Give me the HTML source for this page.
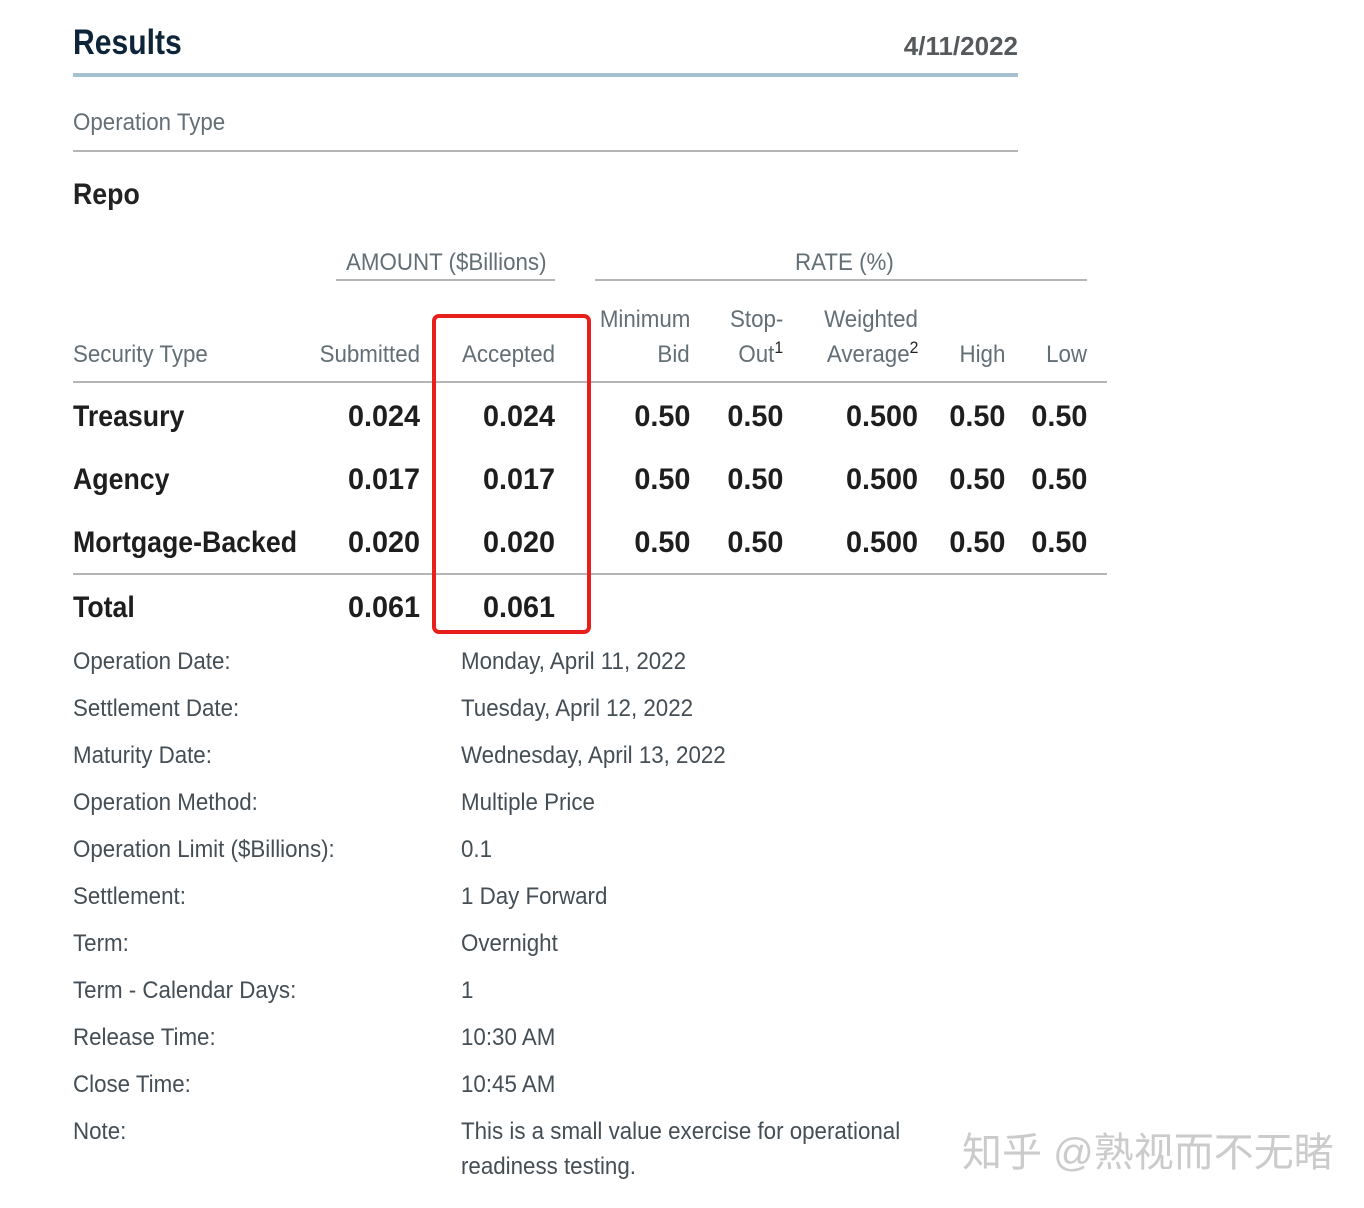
<!DOCTYPE html>
<html><head><meta charset="utf-8"><style>
html,body{margin:0;padding:0;background:#fff;width:1364px;height:1208px;overflow:hidden;position:relative}
body{font-family:"Liberation Sans",sans-serif}
.l,.r{position:absolute;white-space:nowrap;line-height:30px;height:30px}
.l{transform-origin:left center;transform:scaleX(.93)}
.r{transform-origin:right center;transform:scaleX(.93)}
.h{font-size:24px;color:#646f75}
.b{font-size:30px;font-weight:bold;color:#1e1e1e;transform:scaleX(.89)}
.n{font-size:30px;font-weight:bold;color:#1e1e1e;transform:scaleX(.96)}
.d{font-size:24px;color:#454e54}
.ln{position:absolute;height:2px;background:#b5b5b5}
sup{font-size:17px;vertical-align:top;position:relative;top:-7px;color:#222}
</style></head><body>
<div class="l" style="left:73px;top:28px;font-size:35px;font-weight:bold;color:#0e2539;line-height:30px;transform:scaleX(.86)">Results</div>
<div class="r" style="right:346px;top:31px;font-size:26px;font-weight:bold;color:#55595c;transform:scaleX(1)">4/11/2022</div>
<div class="ln" style="left:73px;top:73px;width:945px;height:4px;background:#a6c1d0"></div>
<div class="l h" style="left:73px;top:108px">Operation Type</div>
<div class="ln" style="left:73px;top:150px;width:945px"></div>
<div class="l" style="left:73px;top:180px;font-size:30px;font-weight:bold;color:#222;transform:scaleX(.89)">Repo</div>

<div class="l h" style="left:346px;top:248px">AMOUNT ($Billions)</div>
<div class="ln" style="left:336px;top:279px;width:219px"></div>
<div class="l h" style="left:795px;top:248px">RATE (%)</div>
<div class="ln" style="left:595px;top:279px;width:492px"></div>

<div class="r h" style="right:674px;top:305px">Minimum</div>
<div class="r h" style="right:581px;top:305px">Stop-</div>
<div class="r h" style="right:446px;top:305px">Weighted</div>
<div class="l h" style="left:73px;top:340px">Security Type</div>
<div class="r h" style="right:944px;top:340px">Submitted</div>
<div class="r h" style="right:809px;top:340px">Accepted</div>
<div class="r h" style="right:674px;top:340px">Bid</div>
<div class="r h" style="right:581px;top:340px">Out<sup>1</sup></div>
<div class="r h" style="right:446px;top:340px">Average<sup>2</sup></div>
<div class="r h" style="right:359px;top:340px">High</div>
<div class="r h" style="right:277px;top:340px">Low</div>
<div class="ln" style="left:73px;top:381px;width:1034px"></div>

<div class="l b" style="left:73px;top:402px">Treasury</div>
<div class="r n" style="right:944px;top:402px">0.024</div>
<div class="r n" style="right:809px;top:402px">0.024</div>
<div class="r n" style="right:674px;top:402px">0.50</div>
<div class="r n" style="right:581px;top:402px">0.50</div>
<div class="r n" style="right:446px;top:402px">0.500</div>
<div class="r n" style="right:359px;top:402px">0.50</div>
<div class="r n" style="right:277px;top:402px">0.50</div>

<div class="l b" style="left:73px;top:465px">Agency</div>
<div class="r n" style="right:944px;top:465px">0.017</div>
<div class="r n" style="right:809px;top:465px">0.017</div>
<div class="r n" style="right:674px;top:465px">0.50</div>
<div class="r n" style="right:581px;top:465px">0.50</div>
<div class="r n" style="right:446px;top:465px">0.500</div>
<div class="r n" style="right:359px;top:465px">0.50</div>
<div class="r n" style="right:277px;top:465px">0.50</div>

<div class="l b" style="left:73px;top:528px">Mortgage-Backed</div>
<div class="r n" style="right:944px;top:528px">0.020</div>
<div class="r n" style="right:809px;top:528px">0.020</div>
<div class="r n" style="right:674px;top:528px">0.50</div>
<div class="r n" style="right:581px;top:528px">0.50</div>
<div class="r n" style="right:446px;top:528px">0.500</div>
<div class="r n" style="right:359px;top:528px">0.50</div>
<div class="r n" style="right:277px;top:528px">0.50</div>
<div class="ln" style="left:73px;top:573px;width:1034px"></div>

<div class="l b" style="left:73px;top:593px">Total</div>
<div class="r n" style="right:944px;top:593px">0.061</div>
<div class="r n" style="right:809px;top:593px">0.061</div>

<div style="position:absolute;left:432px;top:314px;width:151px;height:312px;border:4px solid #e8201c;border-radius:7px"></div>

<div class="l d" style="left:73px;top:647px">Operation Date:</div><div class="l d" style="left:461px;top:647px">Monday, April 11, 2022</div>
<div class="l d" style="left:73px;top:694px">Settlement Date:</div><div class="l d" style="left:461px;top:694px">Tuesday, April 12, 2022</div>
<div class="l d" style="left:73px;top:741px">Maturity Date:</div><div class="l d" style="left:461px;top:741px">Wednesday, April 13, 2022</div>
<div class="l d" style="left:73px;top:788px">Operation Method:</div><div class="l d" style="left:461px;top:788px">Multiple Price</div>
<div class="l d" style="left:73px;top:835px">Operation Limit ($Billions):</div><div class="l d" style="left:461px;top:835px">0.1</div>
<div class="l d" style="left:73px;top:882px">Settlement:</div><div class="l d" style="left:461px;top:882px">1 Day Forward</div>
<div class="l d" style="left:73px;top:929px">Term:</div><div class="l d" style="left:461px;top:929px">Overnight</div>
<div class="l d" style="left:73px;top:976px">Term - Calendar Days:</div><div class="l d" style="left:461px;top:976px">1</div>
<div class="l d" style="left:73px;top:1023px">Release Time:</div><div class="l d" style="left:461px;top:1023px">10:30 AM</div>
<div class="l d" style="left:73px;top:1070px">Close Time:</div><div class="l d" style="left:461px;top:1070px">10:45 AM</div>
<div class="l d" style="left:73px;top:1117px">Note:</div><div class="l d" style="left:461px;top:1117px">This is a small value exercise for operational</div>
<div class="l d" style="left:461px;top:1152px">readiness testing.</div>

<div style="position:absolute;left:962px;top:1129px;font-family:'Liberation Sans','Noto Sans CJK SC',sans-serif;font-size:40px;line-height:48px;color:#cbcbcb;white-space:nowrap">知乎 @熟视而不无睹</div>
</body></html>
